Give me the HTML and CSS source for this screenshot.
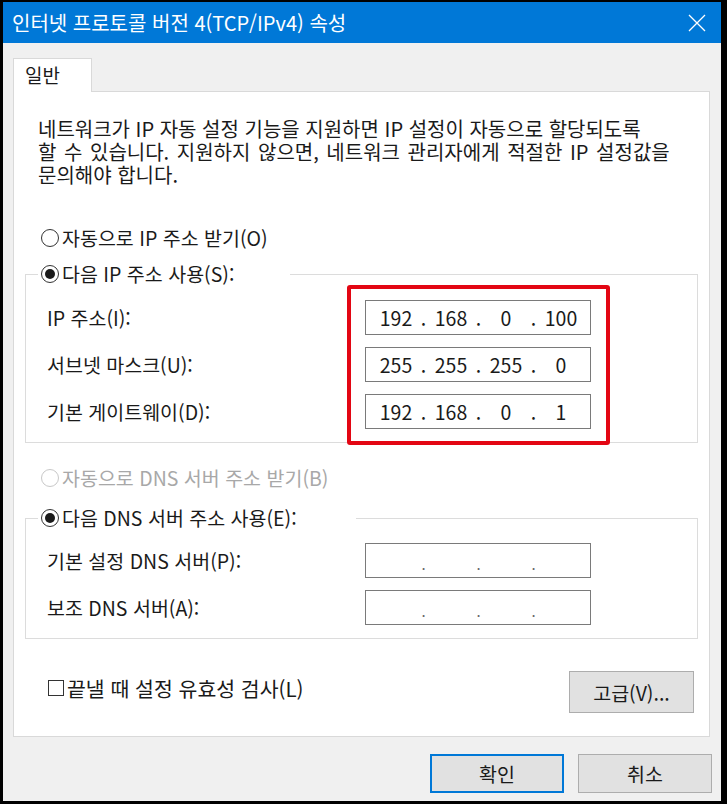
FILE: index.html
```html
<!DOCTYPE html>
<html lang="ko">
<head>
<meta charset="utf-8">
<title>인터넷 프로토콜 버전 4(TCP/IPv4) 속성</title>
<link rel="stylesheet" href="styles.css">
</head>
<body>
<div class="window">
  <div class="titlebar">
    <span class="title">인터넷 프로토콜 버전 4(TCP/IPv4) 속성</span>
    <svg class="close" width="18" height="18" viewBox="0 0 18 18"><path d="M1 1L17 17M17 1L1 17"/></svg>
  </div>
  <div class="client">
    <div class="tabs"><div class="tab">일반</div></div>
    <div class="panel">
      <div class="desc">
        <div class="line">네트워크가 IP 자동 설정 기능을 지원하면 IP 설정이 자동으로 할당되도록</div>
        <div class="line">할 수 있습니다. 지원하지 않으면, 네트워크 관리자에게 적절한 IP 설정값을</div>
        <div class="line">문의해야 합니다.</div>
      </div>

      <div class="radio r-auto-ip"><span class="rb"></span>자동으로 IP 주소 받기(O)</div>

      <fieldset class="group g-ip">
        <legend class="legend l-ip"><span class="radio"><span class="rb on"></span>다음 IP 주소 사용(S):</span></legend>
        <div class="rows rows-ip">
          <div class="labels">
            <div class="lbl">IP 주소(I):</div>
            <div class="lbl">서브넷 마스크(U):</div>
            <div class="lbl">기본 게이트웨이(D):</div>
          </div>
          <div class="inputs highlight">
            <div class="ipbox"><span class="oct">192</span><span class="dot">.</span><span class="oct">168</span><span class="dot">.</span><span class="oct">0</span><span class="dot">.</span><span class="oct">100</span></div>
            <div class="ipbox"><span class="oct">255</span><span class="dot">.</span><span class="oct">255</span><span class="dot">.</span><span class="oct">255</span><span class="dot">.</span><span class="oct">0</span></div>
            <div class="ipbox"><span class="oct">192</span><span class="dot">.</span><span class="oct">168</span><span class="dot">.</span><span class="oct">0</span><span class="dot">.</span><span class="oct">1</span></div>
          </div>
        </div>
      </fieldset>

      <div class="radio disabled r-auto-dns"><span class="rb"></span>자동으로 DNS 서버 주소 받기(B)</div>

      <fieldset class="group g-dns">
        <legend class="legend l-dns"><span class="radio"><span class="rb on"></span>다음 DNS 서버 주소 사용(E):</span></legend>
        <div class="rows rows-dns">
          <div class="labels">
            <div class="lbl">기본 설정 DNS 서버(P):</div>
            <div class="lbl">보조 DNS 서버(A):</div>
          </div>
          <div class="inputs">
            <div class="ipbox empty"><span class="oct"></span><span class="dot">.</span><span class="oct"></span><span class="dot">.</span><span class="oct"></span><span class="dot">.</span><span class="oct"></span></div>
            <div class="ipbox empty"><span class="oct"></span><span class="dot">.</span><span class="oct"></span><span class="dot">.</span><span class="oct"></span><span class="dot">.</span><span class="oct"></span></div>
          </div>
        </div>
      </fieldset>

      <div class="bottom-row">
        <div class="check"><span class="cb"></span>끝낼 때 설정 유효성 검사(L)</div>
        <div class="btn btn-adv">고급(V)...</div>
      </div>
    </div>
    <div class="dialog-buttons">
      <div class="btn btn-dlg default">확인</div>
      <div class="btn btn-dlg">취소</div>
    </div>
  </div>
</div>
</body>
</html>
```

FILE: styles.css
```css
html, body {
  margin: 0;
  padding: 0;
  background: #000;
}
body {
  width: 727px;
  height: 804px;
  overflow: hidden;
  font-family: "Noto Sans CJK KR", "Noto Sans", sans-serif;
  font-size: 19.5px;
  color: #1a1a1a;
}
.window {
  margin: 2px 0 0 3px;
  width: 718px;
  height: 799px;
  display: flex;
  flex-direction: column;
  background: #f0f0f0;
}
.titlebar {
  height: 41px;
  background: #0078d7;
  display: flex;
  align-items: center;
  justify-content: space-between;
  padding: 0 15px 0 9px;
  flex-shrink: 0;
}
.title {
  color: #fff;
  font-size: 20px;
  line-height: 24px;
}
.close path {
  stroke: #fff;
  stroke-width: 1.3;
  fill: none;
}
.client {
  flex: 1;
  padding: 0 0 0 10px;
  display: flex;
  flex-direction: column;
}
.tabs {
  margin-top: 15px;
  display: flex;
}
.tab {
  width: 79px;
  height: 34px;
  box-sizing: border-box;
  border: 1px solid #d9d9d9;
  border-bottom: none;
  background: #fff;
  padding-left: 11px;
  line-height: 31px;
  font-size: 19px;
  position: relative;
  z-index: 1;
  margin-bottom: -1px;
}
.panel {
  width: 697px;
  box-sizing: border-box;
  border: 1px solid #d9d9d9;
  background: #fff;
  padding: 0 11px 23px 11px;
}
.desc {
  margin: 25px 0 0 13px;
  font-size: 20px;
  white-space: nowrap;
}
.desc .line {
  height: 23px;
  line-height: 23px;
}
.desc .line:nth-child(2) {
  word-spacing: 2px;
}
.radio {
  display: flex;
  align-items: center;
  height: 24px;
  line-height: 24px;
  white-space: nowrap;
}
.r-auto-ip {
  margin: 40px 0 0 16px;
}
.r-auto-dns {
  margin: 23px 0 0 16px;
}
.rb {
  width: 18px;
  height: 18px;
  box-sizing: border-box;
  border: 1px solid #333;
  border-radius: 50%;
  margin-right: 3px;
  position: relative;
  flex-shrink: 0;
  background: #fff;
}
.rb.on::after {
  content: "";
  position: absolute;
  left: 3px;
  top: 3px;
  width: 10px;
  height: 10px;
  border-radius: 50%;
  background: #1a1a1a;
}
.disabled {
  color: #a8a8a8;
}
.disabled .rb {
  border-color: #c8c8c8;
}
.group {
  margin: 0;
  padding: 0 0 13px 12px;
  border: 1px solid #dcdcdc;
  min-width: 0;
}
.g-ip {
  margin-top: 12px;
}
.g-dns {
  margin-top: 16px;
}
.legend {
  padding: 0;
  margin-left: 0;
}
.l-ip .radio { padding-left: 3px; width: 249px; }
.l-dns .radio { padding-left: 3px; width: 315px; }

.rows {
  display: flex;
  padding-left: 9px;
}
.rows-ip { margin-top: 14px; }
.rows-dns { margin-top: 13px; }
.labels {
  width: 318px;
  display: flex;
  flex-direction: column;
  gap: 12px;
}
.lbl {
  height: 35px;
  display: flex;
  align-items: center;
  white-space: nowrap;
}
.inputs {
  display: flex;
  flex-direction: column;
  gap: 12px;
  position: relative;
}
.highlight::before {
  content: "";
  position: absolute;
  left: -18px;
  right: -19px;
  top: -15px;
  bottom: -16px;
  border: 4px solid #e30613;
  border-radius: 3px;
}
.ipbox {
  width: 226px;
  height: 35px;
  box-sizing: border-box;
  border: 1px solid #7a7a7a;
  background: #fff;
  display: flex;
  align-items: center;
  padding-left: 8px;
}
.oct {
  width: 44px;
  text-align: center;
}
.dot {
  width: 11px;
  text-align: center;
}
.empty .dot {
  color: #666;
  font-size: 15px;
  padding-top: 6px;
}
.bottom-row {
  margin-top: 32px;
  display: flex;
  align-items: center;
  justify-content: space-between;
  padding: 0 4px 0 23px;
}
.check {
  display: flex;
  align-items: center;
  white-space: nowrap;
  margin-top: -8px;
  font-size: 20.5px;
}
.cb {
  width: 16px;
  height: 16px;
  box-sizing: border-box;
  border: 1px solid #333;
  background: #fff;
  margin-right: 3px;
}
.btn {
  box-sizing: border-box;
  background: #e1e1e1;
  border: 1px solid #adadad;
  display: flex;
  align-items: center;
  justify-content: center;
  white-space: nowrap;
}
.btn-adv {
  width: 125px;
  height: 42px;
}
.dialog-buttons {
  margin-top: 17px;
  display: flex;
  justify-content: flex-end;
  gap: 14px;
  padding-right: 9px;
}
.btn-dlg {
  width: 134px;
  height: 39px;
}
.btn-dlg.default {
  border: 2px solid #0078d7;
}
```
